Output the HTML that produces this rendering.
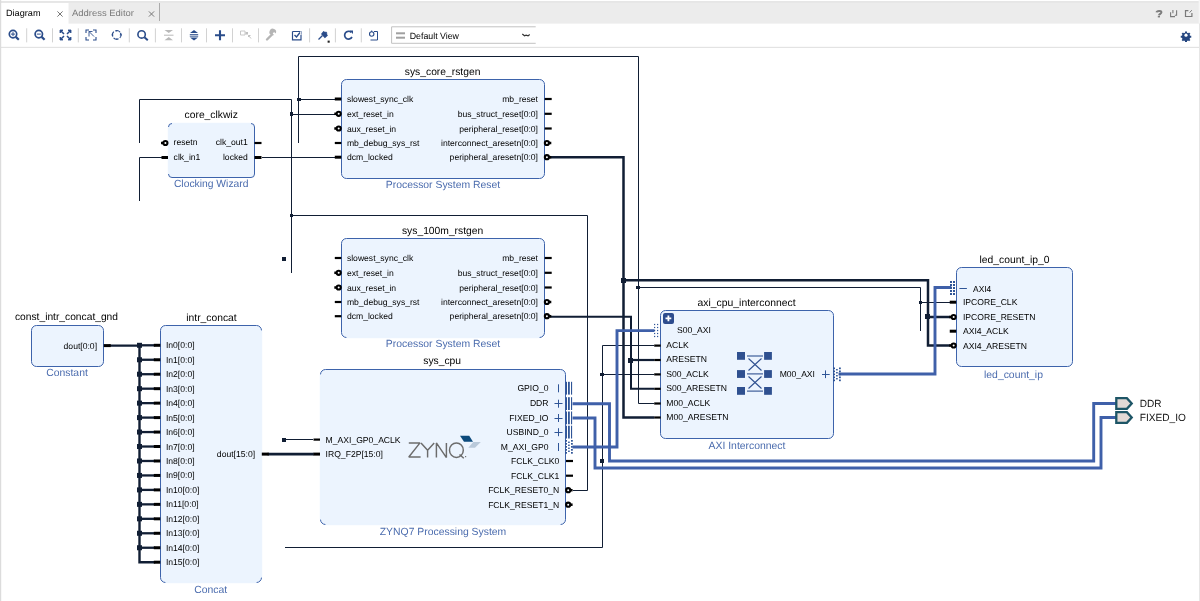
<!DOCTYPE html>
<html><head><meta charset="utf-8"><style>html,body{margin:0;padding:0;background:#fff;overflow:hidden}svg{display:block;will-change:transform}</style></head><body>
<svg width="1200" height="601" viewBox="0 0 1200 601" font-family='"Liberation Sans", sans-serif' text-rendering="geometricPrecision">
<rect x="0" y="0" width="1200" height="601" fill="#fff"/>
<rect x="0" y="0" width="1200" height="23.6" fill="#ececec"/>
<rect x="0" y="0" width="1200" height="1.3" fill="#ffffff"/>
<rect x="0" y="1.3" width="1200" height="1.2" fill="#e2e2e2"/>
<rect x="1198.6" y="0" width="1.4" height="23.5" fill="#f6f6f6"/>
<rect x="1" y="3" width="67.5" height="21" fill="#fff"/>
<text x="6" y="15.9" font-size="9" text-anchor="start" fill="#000" textLength="34.5" lengthAdjust="spacingAndGlyphs" >Diagram</text>
<text x="72" y="15.9" font-size="9" text-anchor="start" fill="#7a7a7a" textLength="62" lengthAdjust="spacingAndGlyphs" >Address Editor</text>
<path d="M57.4,11.4 L62.6,16.6 M62.6,11.4 L57.4,16.6" stroke="#777" stroke-width="1"/>
<path d="M148.9,11.4 L154.1,16.6 M154.1,11.4 L148.9,16.6" stroke="#777" stroke-width="1"/>
<line x1="159.5" y1="3" x2="159.5" y2="21" stroke="#ababab" stroke-width="1"/>
<path d="M1156.6,12.4 C1156.8,10.6 1161.4,10.4 1161.4,12.2 C1161.4,13.6 1159.3,13.9 1159,15.2" fill="none" stroke="#7e7e7e" stroke-width="2"/>
<rect x="1157.8" y="15.8" width="2.2" height="1.6" fill="#7e7e7e"/>
<path d="M1170.6,12.2 v4.4 h4.4 M1172.9,10 v3.2 M1176.6,10.2 v5 h-1.8" fill="none" stroke="#7a7a7a" stroke-width="1.1"/>
<path d="M1188.4,10.6 h-2.9 v5.9 h6.4 v-3.6" fill="none" stroke="#7a7a7a" stroke-width="1.2"/>
<path d="M1189.6,12.6 l2.2,-2.4" fill="none" stroke="#7a7a7a" stroke-width="1"/>
<rect x="0" y="46.8" width="1200" height="1.2" fill="#e3e3e3"/>
<rect x="0" y="0" width="1.2" height="601" fill="#dcdcdc"/>
<rect x="1199" y="23.5" width="1" height="578" fill="#e6e6e6"/>
<line x1="26.7" y1="28.3" x2="26.7" y2="42.4" stroke="#d2d2d2" stroke-width="1"/>
<line x1="52.5" y1="28.3" x2="52.5" y2="42.4" stroke="#d2d2d2" stroke-width="1"/>
<line x1="78.3" y1="28.3" x2="78.3" y2="42.4" stroke="#d2d2d2" stroke-width="1"/>
<line x1="129.3" y1="28.3" x2="129.3" y2="42.4" stroke="#d2d2d2" stroke-width="1"/>
<line x1="155.4" y1="28.3" x2="155.4" y2="42.4" stroke="#d2d2d2" stroke-width="1"/>
<line x1="181.5" y1="28.3" x2="181.5" y2="42.4" stroke="#d2d2d2" stroke-width="1"/>
<line x1="206.5" y1="28.3" x2="206.5" y2="42.4" stroke="#d2d2d2" stroke-width="1"/>
<line x1="232.5" y1="28.3" x2="232.5" y2="42.4" stroke="#d2d2d2" stroke-width="1"/>
<line x1="258.5" y1="28.3" x2="258.5" y2="42.4" stroke="#d2d2d2" stroke-width="1"/>
<line x1="309.6" y1="28.3" x2="309.6" y2="42.4" stroke="#d2d2d2" stroke-width="1"/>
<line x1="335.4" y1="28.3" x2="335.4" y2="42.4" stroke="#d2d2d2" stroke-width="1"/>
<line x1="361.3" y1="28.3" x2="361.3" y2="42.4" stroke="#d2d2d2" stroke-width="1"/>
<circle cx="13" cy="34.1" r="3.7" fill="none" stroke="#2a4c8a" stroke-width="1.7"/>
<path d="M11,34.1 h4 M13,32.1 v4" stroke="#2a4c8a" stroke-width="1"/>
<path d="M15.8,36.9 L18.8,39.8" stroke="#2a4c8a" stroke-width="2.2"/>
<circle cx="38.8" cy="34.1" r="3.7" fill="none" stroke="#2a4c8a" stroke-width="1.7"/>
<path d="M36.8,34.1 h4" stroke="#2a4c8a" stroke-width="1"/>
<path d="M41.6,36.9 L44.6,39.8" stroke="#2a4c8a" stroke-width="2.2"/>
<path d="M60.5,30.5 l3.5,3.5 M70.5,30.5 l-3.5,3.5 M60.5,39.5 l3.5,-3.5 M70.5,39.5 l-3.5,-3.5" stroke="#2a4c8a" stroke-width="1.5"/>
<path d="M60,30 h3 l-3,3 z M71,30 h-3 l3,3 z M60,40 h3 l-3,-3 z M71,40 h-3 l3,-3 z" fill="#2a4c8a" stroke="#2a4c8a" stroke-width="0.8"/>
<path d="M86,33 v-3 h3 M93,30 h3 v3 M96,37 v3 h-3 M89,40 h-3 v-3" fill="none" stroke="#2a4c8a" stroke-width="1.1"/>
<path d="M89,31.5 l5,5 M89,31.5 v5 M89,31.5 h3.5" fill="none" stroke="#2a4c8a" stroke-width="0.9"/>
<circle cx="116.7" cy="34.9" r="4.3" fill="none" stroke="#2a4c8a" stroke-width="1.1" stroke-dasharray="5.2 1.55" transform="rotate(-28 116.7 34.9)"/>
<path d="M116.7,30 v1.6 M121.7,34.9 h-1.8 M116.7,39.8 v-1.2 M111.7,34.9 h1.5" stroke="#2a4c8a" stroke-width="1.2"/>
<circle cx="141.6" cy="34.4" r="3.7" fill="none" stroke="#2a4c8a" stroke-width="1.6"/>
<path d="M144.4,37.2 L147.8,40.2" stroke="#2a4c8a" stroke-width="2"/>
<path d="M164.5,30 h8.5 l-4.25,3 z M164.5,40.2 h8.5 l-4.25,-3.2 z" fill="#b8b8b8"/>
<path d="M164,35.2 h9.5" stroke="#b8b8b8" stroke-width="1"/>
<path d="M190,33 h8 l-4,-3 z M190,37.4 h8 l-4,3 z" fill="#2a4c8a"/>
<path d="M189.8,34.6 h8.4 M189.8,36.2 h8.4" stroke="#2a4c8a" stroke-width="0.9"/>
<path d="M215,35.2 h10 M220,30.2 v10" stroke="#2a4c8a" stroke-width="2.1"/>
<path d="M240.5,31 h4.5 v4 h-4.5 z" fill="none" stroke="#c8c8c8" stroke-width="1"/>
<rect x="245.5" y="32" width="2.5" height="2.5" fill="#c0c0c0"/>
<path d="M248.5,35.5 l2.5,3 M248.5,35.5 h2 M248.5,35.5 v1.5" fill="none" stroke="#c0c0c0" stroke-width="1"/>
<path d="M267,39.5 l5,-5" stroke="#b5b5b5" stroke-width="2.4" stroke-linecap="round"/>
<path d="M271.5,35 a3.3,3.3 0 1 1 4.2,-1.6 l-1.6,-1.4 -1.5,1.5 1.4,1.6 a3.3,3.3 0 0 1 -2.5,-0.1 z" fill="#b5b5b5"/>
<path d="M292.5,31.5 h7.5 M292.5,31.5 v8.3 h8.5 v-5" fill="none" stroke="#2a4c8a" stroke-width="1.2"/>
<path d="M294.5,35 l2,2 3.5,-4.5" fill="none" stroke="#2a4c8a" stroke-width="1.4"/>
<path d="M298,31.5 h3.5 v3" fill="none" stroke="#2a4c8a" stroke-width="0.8" opacity="0.6"/>
<path d="M318.5,39.5 l4,-4" stroke="#2a4c8a" stroke-width="1.3"/>
<path d="M321,34 l2.5,-3 2,1.2 0.3,-1 1.8,2 -1,0.4 1.3,2 -3,2.6 z" fill="#2a4c8a"/>
<rect x="327.6" y="40.6" width="2.1" height="2.1" fill="#222"/>
<path d="M351.2,32.3 A3.9,3.9 0 1 0 352,37" fill="none" stroke="#2a4c8a" stroke-width="1.7"/>
<path d="M349.5,30.5 h3.5 v3.5 z" fill="#2a4c8a"/>
<path d="M374,31.5 h3.5 M377.5,31.5 v8.5 h-7" fill="none" stroke="#2a4c8a" stroke-width="1"/>
<circle cx="371.7" cy="34" r="2.2" fill="none" stroke="#2a4c8a" stroke-width="1.1"/>
<path d="M371.7,30.5 v1.5" stroke="#2a4c8a" stroke-width="1"/>
<path d="M535.7,26.8 H391.6 V43.3 H535.7" fill="none" stroke="#c2c2c2" stroke-width="1"/>
<rect x="396" y="32.3" width="9" height="2" fill="#a0a0a0"/>
<rect x="396" y="36.7" width="9" height="2" fill="#a0a0a0"/>
<text x="409.7" y="39.2" font-size="9" text-anchor="start" fill="#000" textLength="49.3" lengthAdjust="spacingAndGlyphs" >Default View</text>
<path d="M522.3,34 l2.2,1.8 1.6,-0.7 2,0.8 1.6,-1.4" fill="none" stroke="#333" stroke-width="1.2"/>
<g transform="translate(1186,35.2) scale(0.72)"><path d="M-1.4,-5 h2.8 v1.6 l1.6,0.8 1.2,-1.2 1.9,1.9 -1.2,1.2 0.8,1.6 h1.6 v2.8 h-1.6 l-0.8,1.6 1.2,1.2 -1.9,1.9 -1.2,-1.2 -1.6,0.8 v1.6 h-2.8 v-1.6 l-1.6,-0.8 -1.2,1.2 -1.9,-1.9 1.2,-1.2 -0.8,-1.6 h-1.6 v-2.8 h1.6 l0.8,-1.6 -1.2,-1.2 1.9,-1.9 1.2,1.2 1.6,-0.8 z" fill="#23457f"/><circle r="2.2" fill="#fff"/></g>
<polyline points="139.5,142.5 139.5,99.5 291.5,99.5 291.5,272.5" fill="none" stroke="#111e34" stroke-width="1.0" stroke-linejoin="miter" stroke-linecap="square" />
<polyline points="291.5,114.5 335.5,114.5" fill="none" stroke="#111e34" stroke-width="1.0" stroke-linejoin="miter" stroke-linecap="square" />
<polyline points="291.5,215.5 587.5,215.5 587.5,490.5 573.5,490.5" fill="none" stroke="#111e34" stroke-width="1.0" stroke-linejoin="miter" stroke-linecap="square" />
<polyline points="298.5,142.5 298.5,56.5 638.5,56.5 638.5,403.5 653.5,403.5" fill="none" stroke="#111e34" stroke-width="1.0" stroke-linejoin="miter" stroke-linecap="square" />
<polyline points="298.5,99.5 335.5,99.5" fill="none" stroke="#111e34" stroke-width="1.0" stroke-linejoin="miter" stroke-linecap="square" />
<polyline points="638.5,287.5 920.5,287.5 920.5,330.5" fill="none" stroke="#111e34" stroke-width="1.0" stroke-linejoin="miter" stroke-linecap="square" />
<polyline points="920.5,302.5 949.5,302.5" fill="none" stroke="#111e34" stroke-width="1.0" stroke-linejoin="miter" stroke-linecap="square" />
<polyline points="161.5,157.5 139.5,157.5 139.5,200.5" fill="none" stroke="#111e34" stroke-width="1.0" stroke-linejoin="miter" stroke-linecap="square" />
<polyline points="262.5,157.5 335.5,157.5" fill="none" stroke="#111e34" stroke-width="1.0" stroke-linejoin="miter" stroke-linecap="square" />
<polyline points="284.5,439.5 312.5,439.5" fill="none" stroke="#111e34" stroke-width="1.0" stroke-linejoin="miter" stroke-linecap="square" />
<polyline points="653.5,345.5 602.5,345.5 602.5,547.5 285.5,547.5" fill="none" stroke="#111e34" stroke-width="1.0" stroke-linejoin="miter" stroke-linecap="square" />
<polyline points="602.5,374.5 653.5,374.5" fill="none" stroke="#111e34" stroke-width="1.0" stroke-linejoin="miter" stroke-linecap="square" />
<polyline points="551,316.8 631,316.8 631,388.8 653,388.8" fill="none" stroke="#111e34" stroke-width="2.0" stroke-linejoin="miter" stroke-linecap="square" />
<polyline points="631,360 653,360" fill="none" stroke="#111e34" stroke-width="2.2" stroke-linejoin="miter" stroke-linecap="square" />
<polyline points="551,157.2 623.5,157.2 623.5,417.5 653,417.5" fill="none" stroke="#111e34" stroke-width="2.5" stroke-linejoin="miter" stroke-linecap="square" />
<polyline points="623.5,280.2 928,280.2 928,345.5 949,345.5" fill="none" stroke="#111e34" stroke-width="2.5" stroke-linejoin="miter" stroke-linecap="square" />
<polyline points="928,317 949,317" fill="none" stroke="#111e34" stroke-width="2.5" stroke-linejoin="miter" stroke-linecap="square" />
<polyline points="110,345.6 139.5,345.6 139.5,562.2 154,562.2" fill="none" stroke="#111e34" stroke-width="2.4" stroke-linejoin="miter" stroke-linecap="square" />
<polyline points="139.5,345.3 154,345.3" fill="none" stroke="#111e34" stroke-width="2.3" stroke-linejoin="miter" stroke-linecap="square" />
<polyline points="139.5,359.76 154,359.76" fill="none" stroke="#111e34" stroke-width="2.3" stroke-linejoin="miter" stroke-linecap="square" />
<polyline points="139.5,374.22 154,374.22" fill="none" stroke="#111e34" stroke-width="2.3" stroke-linejoin="miter" stroke-linecap="square" />
<polyline points="139.5,388.68 154,388.68" fill="none" stroke="#111e34" stroke-width="2.3" stroke-linejoin="miter" stroke-linecap="square" />
<polyline points="139.5,403.14 154,403.14" fill="none" stroke="#111e34" stroke-width="2.3" stroke-linejoin="miter" stroke-linecap="square" />
<polyline points="139.5,417.6 154,417.6" fill="none" stroke="#111e34" stroke-width="2.3" stroke-linejoin="miter" stroke-linecap="square" />
<polyline points="139.5,432.06 154,432.06" fill="none" stroke="#111e34" stroke-width="2.3" stroke-linejoin="miter" stroke-linecap="square" />
<polyline points="139.5,446.52 154,446.52" fill="none" stroke="#111e34" stroke-width="2.3" stroke-linejoin="miter" stroke-linecap="square" />
<polyline points="139.5,460.98 154,460.98" fill="none" stroke="#111e34" stroke-width="2.3" stroke-linejoin="miter" stroke-linecap="square" />
<polyline points="139.5,475.44000000000005 154,475.44000000000005" fill="none" stroke="#111e34" stroke-width="2.3" stroke-linejoin="miter" stroke-linecap="square" />
<polyline points="139.5,489.90000000000003 154,489.90000000000003" fill="none" stroke="#111e34" stroke-width="2.3" stroke-linejoin="miter" stroke-linecap="square" />
<polyline points="139.5,504.36 154,504.36" fill="none" stroke="#111e34" stroke-width="2.3" stroke-linejoin="miter" stroke-linecap="square" />
<polyline points="139.5,518.82 154,518.82" fill="none" stroke="#111e34" stroke-width="2.3" stroke-linejoin="miter" stroke-linecap="square" />
<polyline points="139.5,533.28 154,533.28" fill="none" stroke="#111e34" stroke-width="2.3" stroke-linejoin="miter" stroke-linecap="square" />
<polyline points="139.5,547.74 154,547.74" fill="none" stroke="#111e34" stroke-width="2.3" stroke-linejoin="miter" stroke-linecap="square" />
<polyline points="269,454.1 312.5,454.1" fill="none" stroke="#111e34" stroke-width="2.8" stroke-linejoin="miter" stroke-linecap="square" />
<rect x="290" y="112" width="3" height="4" fill="#111e34"/>
<rect x="290" y="214" width="3" height="3" fill="#111e34"/>
<rect x="297" y="98" width="4" height="3" fill="#111e34"/>
<rect x="636" y="286" width="4" height="3" fill="#111e34"/>
<rect x="919" y="301" width="3" height="3" fill="#111e34"/>
<rect x="600" y="373" width="4" height="3" fill="#111e34"/>
<rect x="600" y="459" width="4" height="4" fill="#111e34"/>
<rect x="282" y="257" width="4" height="4" fill="#111e34"/>
<rect x="282" y="438" width="4" height="4" fill="#111e34"/>
<rect x="621" y="278" width="5" height="5" fill="#111e34"/>
<rect x="925" y="314" width="5" height="5" fill="#111e34"/>
<rect x="628" y="358" width="5" height="5" fill="#111e34"/>
<rect x="137" y="342.8" width="5" height="5" fill="#111e34"/>
<rect x="137" y="357.26" width="5" height="5" fill="#111e34"/>
<rect x="137" y="371.72" width="5" height="5" fill="#111e34"/>
<rect x="137" y="386.18" width="5" height="5" fill="#111e34"/>
<rect x="137" y="400.64" width="5" height="5" fill="#111e34"/>
<rect x="137" y="415.1" width="5" height="5" fill="#111e34"/>
<rect x="137" y="429.56" width="5" height="5" fill="#111e34"/>
<rect x="137" y="444.02" width="5" height="5" fill="#111e34"/>
<rect x="137" y="458.48" width="5" height="5" fill="#111e34"/>
<rect x="137" y="472.94000000000005" width="5" height="5" fill="#111e34"/>
<rect x="137" y="487.40000000000003" width="5" height="5" fill="#111e34"/>
<rect x="137" y="501.86" width="5" height="5" fill="#111e34"/>
<rect x="137" y="516.32" width="5" height="5" fill="#111e34"/>
<rect x="137" y="530.78" width="5" height="5" fill="#111e34"/>
<rect x="137" y="545.24" width="5" height="5" fill="#111e34"/>
<polyline points="653,330.6 617,330.6 617,447 574,447" fill="none" stroke="#3f60a9" stroke-width="2.9" stroke-linejoin="miter" stroke-linecap="square" />
<polyline points="574,403.7 609.5,403.7 609.5,461 1093.7,461 1093.7,403.5 1115,403.5" fill="none" stroke="#3f60a9" stroke-width="2.9" stroke-linejoin="miter" stroke-linecap="square" />
<polyline points="574,418 595,418 595,468 1101,468 1101,417.5 1115,417.5" fill="none" stroke="#3f60a9" stroke-width="2.9" stroke-linejoin="miter" stroke-linecap="square" />
<polyline points="840,374 935,374 935,287.5 950,287.5" fill="none" stroke="#3f60a9" stroke-width="2.9" stroke-linejoin="miter" stroke-linecap="square" />
<rect x="168.5" y="123.5" width="86.0" height="54.0" rx="3.5" ry="3.5" fill="#ecf4fe" stroke="#3d63ab" stroke-width="1"/>
<rect x="172.0" y="122.8" width="79.0" height="1.4" fill="#ecf4fe"/>
<rect x="167.8" y="127.0" width="1.4" height="47.0" fill="#ecf4fe"/>
<text x="211.2" y="118" font-size="10.3" text-anchor="middle" fill="#000" >core_clkwiz</text>
<text x="211.2" y="187" font-size="10.4" text-anchor="middle" fill="#4b6cae" textLength="74.6" lengthAdjust="spacingAndGlyphs" >Clocking Wizard</text>
<line x1="161" y1="143" x2="165.4" y2="143" stroke="#000" stroke-width="2.5"/>
<circle cx="165.4" cy="143" r="2.05" fill="#fff" stroke="#000" stroke-width="2.1"/>
<text x="173.6" y="145.2" font-size="8.6" text-anchor="start" fill="#000" >resetn</text>
<line x1="161.5" y1="157.5" x2="168" y2="157.5" stroke="#000" stroke-width="3.0"/>
<text x="173.6" y="159.7" font-size="8.6" text-anchor="start" fill="#000" >clk_in1</text>
<line x1="254.5" y1="143" x2="261.5" y2="143" stroke="#000" stroke-width="2.2"/>
<text x="247.8" y="145.2" font-size="8.6" text-anchor="end" fill="#000" >clk_out1</text>
<line x1="254.5" y1="157.5" x2="261.5" y2="157.5" stroke="#000" stroke-width="3.0"/>
<text x="247.8" y="159.7" font-size="8.6" text-anchor="end" fill="#000" >locked</text>
<rect x="341.5" y="79.5" width="203.0" height="99.0" rx="5" ry="5" fill="#ecf4fe" stroke="#3d63ab" stroke-width="1"/>
<text x="442.6" y="75.0" font-size="10.3" text-anchor="middle" fill="#000" >sys_core_rstgen</text>
<text x="443" y="188.0" font-size="10.4" text-anchor="middle" fill="#4b6cae" textLength="114.5" lengthAdjust="spacingAndGlyphs" >Processor System Reset</text>
<line x1="334.8" y1="99" x2="341.3" y2="99" stroke="#000" stroke-width="3.0"/>
<text x="346.90000000000003" y="102.0" font-size="8.6" text-anchor="start" fill="#000" >slowest_sync_clk</text>
<line x1="334.3" y1="113.8" x2="338.7" y2="113.8" stroke="#000" stroke-width="2.5"/>
<circle cx="338.7" cy="113.8" r="2.05" fill="#fff" stroke="#000" stroke-width="2.1"/>
<text x="346.90000000000003" y="116.8" font-size="8.6" text-anchor="start" fill="#000" >ext_reset_in</text>
<line x1="334.3" y1="128.5" x2="338.7" y2="128.5" stroke="#000" stroke-width="2.5"/>
<circle cx="338.7" cy="128.5" r="2.05" fill="#fff" stroke="#000" stroke-width="2.1"/>
<text x="346.90000000000003" y="131.5" font-size="8.6" text-anchor="start" fill="#000" >aux_reset_in</text>
<line x1="334.8" y1="143" x2="341.3" y2="143" stroke="#000" stroke-width="2.2"/>
<text x="346.90000000000003" y="146.0" font-size="8.6" text-anchor="start" fill="#000" >mb_debug_sys_rst</text>
<line x1="334.8" y1="157.2" x2="341.3" y2="157.2" stroke="#000" stroke-width="3.0"/>
<text x="346.90000000000003" y="160.2" font-size="8.6" text-anchor="start" fill="#000" >dcm_locked</text>
<line x1="544.7" y1="99" x2="551.7" y2="99" stroke="#000" stroke-width="2.2"/>
<text x="538.0" y="102.0" font-size="8.6" text-anchor="end" fill="#000" >mb_reset</text>
<line x1="544.7" y1="113.8" x2="551.7" y2="113.8" stroke="#000" stroke-width="2.2"/>
<text x="538.0" y="116.8" font-size="8.6" text-anchor="end" fill="#000" >bus_struct_reset[0:0]</text>
<line x1="544.7" y1="128.5" x2="551.7" y2="128.5" stroke="#000" stroke-width="2.2"/>
<text x="538.0" y="131.5" font-size="8.6" text-anchor="end" fill="#000" >peripheral_reset[0:0]</text>
<line x1="546.9000000000001" y1="143" x2="551.3000000000001" y2="143" stroke="#000" stroke-width="2.5"/>
<circle cx="546.9000000000001" cy="143" r="2.05" fill="#fff" stroke="#000" stroke-width="2.1"/>
<text x="538.0" y="146.0" font-size="8.6" text-anchor="end" fill="#000" >interconnect_aresetn[0:0]</text>
<line x1="546.9000000000001" y1="157.2" x2="551.3000000000001" y2="157.2" stroke="#000" stroke-width="2.5"/>
<circle cx="546.9000000000001" cy="157.2" r="2.05" fill="#fff" stroke="#000" stroke-width="2.1"/>
<text x="538.0" y="160.2" font-size="8.6" text-anchor="end" fill="#000" >peripheral_aresetn[0:0]</text>
<rect x="341.5" y="238.5" width="203.0" height="99.0" rx="5" ry="5" fill="#ecf4fe" stroke="#3d63ab" stroke-width="1"/>
<rect x="346.5" y="336.8" width="193.0" height="1.4" fill="#ecf4fe"/>
<text x="442.6" y="234.0" font-size="10.3" text-anchor="middle" fill="#000" >sys_100m_rstgen</text>
<text x="443" y="347.0" font-size="10.4" text-anchor="middle" fill="#4b6cae" textLength="114.5" lengthAdjust="spacingAndGlyphs" >Processor System Reset</text>
<line x1="334.8" y1="258" x2="341.3" y2="258" stroke="#000" stroke-width="2.2"/>
<text x="346.90000000000003" y="261.0" font-size="8.6" text-anchor="start" fill="#000" >slowest_sync_clk</text>
<line x1="334.3" y1="272.8" x2="338.7" y2="272.8" stroke="#000" stroke-width="2.5"/>
<circle cx="338.7" cy="272.8" r="2.05" fill="#fff" stroke="#000" stroke-width="2.1"/>
<text x="346.90000000000003" y="275.8" font-size="8.6" text-anchor="start" fill="#000" >ext_reset_in</text>
<line x1="334.3" y1="287.5" x2="338.7" y2="287.5" stroke="#000" stroke-width="2.5"/>
<circle cx="338.7" cy="287.5" r="2.05" fill="#fff" stroke="#000" stroke-width="2.1"/>
<text x="346.90000000000003" y="290.5" font-size="8.6" text-anchor="start" fill="#000" >aux_reset_in</text>
<line x1="334.8" y1="302" x2="341.3" y2="302" stroke="#000" stroke-width="2.2"/>
<text x="346.90000000000003" y="305.0" font-size="8.6" text-anchor="start" fill="#000" >mb_debug_sys_rst</text>
<line x1="334.8" y1="316.2" x2="341.3" y2="316.2" stroke="#000" stroke-width="2.2"/>
<text x="346.90000000000003" y="319.2" font-size="8.6" text-anchor="start" fill="#000" >dcm_locked</text>
<line x1="544.7" y1="258" x2="551.7" y2="258" stroke="#000" stroke-width="2.2"/>
<text x="538.0" y="261.0" font-size="8.6" text-anchor="end" fill="#000" >mb_reset</text>
<line x1="544.7" y1="272.8" x2="551.7" y2="272.8" stroke="#000" stroke-width="2.2"/>
<text x="538.0" y="275.8" font-size="8.6" text-anchor="end" fill="#000" >bus_struct_reset[0:0]</text>
<line x1="544.7" y1="287.5" x2="551.7" y2="287.5" stroke="#000" stroke-width="2.2"/>
<text x="538.0" y="290.5" font-size="8.6" text-anchor="end" fill="#000" >peripheral_reset[0:0]</text>
<line x1="546.9000000000001" y1="302" x2="551.3000000000001" y2="302" stroke="#000" stroke-width="2.5"/>
<circle cx="546.9000000000001" cy="302" r="2.05" fill="#fff" stroke="#000" stroke-width="2.1"/>
<text x="538.0" y="305.0" font-size="8.6" text-anchor="end" fill="#000" >interconnect_aresetn[0:0]</text>
<line x1="546.9000000000001" y1="316.2" x2="551.3000000000001" y2="316.2" stroke="#000" stroke-width="2.5"/>
<circle cx="546.9000000000001" cy="316.2" r="2.05" fill="#fff" stroke="#000" stroke-width="2.1"/>
<text x="538.0" y="319.2" font-size="8.6" text-anchor="end" fill="#000" >peripheral_aresetn[0:0]</text>
<rect x="31.5" y="325.5" width="72.0" height="41.0" rx="5" ry="5" fill="#ecf4fe" stroke="#3d63ab" stroke-width="1"/>
<text x="66.5" y="320" font-size="10.3" text-anchor="middle" fill="#000" textLength="103" lengthAdjust="spacingAndGlyphs" >const_intr_concat_gnd</text>
<text x="67" y="376" font-size="10.4" text-anchor="middle" fill="#4b6cae" >Constant</text>
<line x1="103.75" y1="345.6" x2="110.75" y2="345.6" stroke="#000" stroke-width="3.0"/>
<text x="97.05" y="348.6" font-size="8.6" text-anchor="end" fill="#000" >dout[0:0]</text>
<rect x="160.5" y="325.5" width="101.0" height="257.0" rx="5" ry="5" fill="#ecf4fe" stroke="#3d63ab" stroke-width="1"/>
<rect x="165.5" y="581.8" width="91.0" height="1.4" fill="#ecf4fe"/>
<rect x="260.8" y="330.5" width="1.4" height="247.0" fill="#ecf4fe"/>
<text x="211.5" y="320.8" font-size="10.3" text-anchor="middle" fill="#000" >intr_concat</text>
<text x="210.7" y="593" font-size="10.4" text-anchor="middle" fill="#4b6cae" >Concat</text>
<line x1="153.8" y1="345.3" x2="160.3" y2="345.3" stroke="#000" stroke-width="3.0"/>
<text x="165.9" y="348.3" font-size="8.6" text-anchor="start" fill="#000" >In0[0:0]</text>
<line x1="153.8" y1="359.76" x2="160.3" y2="359.76" stroke="#000" stroke-width="3.0"/>
<text x="165.9" y="362.76" font-size="8.6" text-anchor="start" fill="#000" >In1[0:0]</text>
<line x1="153.8" y1="374.22" x2="160.3" y2="374.22" stroke="#000" stroke-width="3.0"/>
<text x="165.9" y="377.22" font-size="8.6" text-anchor="start" fill="#000" >In2[0:0]</text>
<line x1="153.8" y1="388.68" x2="160.3" y2="388.68" stroke="#000" stroke-width="3.0"/>
<text x="165.9" y="391.68" font-size="8.6" text-anchor="start" fill="#000" >In3[0:0]</text>
<line x1="153.8" y1="403.14" x2="160.3" y2="403.14" stroke="#000" stroke-width="3.0"/>
<text x="165.9" y="406.14" font-size="8.6" text-anchor="start" fill="#000" >In4[0:0]</text>
<line x1="153.8" y1="417.6" x2="160.3" y2="417.6" stroke="#000" stroke-width="3.0"/>
<text x="165.9" y="420.6" font-size="8.6" text-anchor="start" fill="#000" >In5[0:0]</text>
<line x1="153.8" y1="432.06" x2="160.3" y2="432.06" stroke="#000" stroke-width="3.0"/>
<text x="165.9" y="435.06" font-size="8.6" text-anchor="start" fill="#000" >In6[0:0]</text>
<line x1="153.8" y1="446.52" x2="160.3" y2="446.52" stroke="#000" stroke-width="3.0"/>
<text x="165.9" y="449.52" font-size="8.6" text-anchor="start" fill="#000" >In7[0:0]</text>
<line x1="153.8" y1="460.98" x2="160.3" y2="460.98" stroke="#000" stroke-width="3.0"/>
<text x="165.9" y="463.98" font-size="8.6" text-anchor="start" fill="#000" >In8[0:0]</text>
<line x1="153.8" y1="475.44000000000005" x2="160.3" y2="475.44000000000005" stroke="#000" stroke-width="3.0"/>
<text x="165.9" y="478.44000000000005" font-size="8.6" text-anchor="start" fill="#000" >In9[0:0]</text>
<line x1="153.8" y1="489.90000000000003" x2="160.3" y2="489.90000000000003" stroke="#000" stroke-width="3.0"/>
<text x="165.9" y="492.90000000000003" font-size="8.6" text-anchor="start" fill="#000" >In10[0:0]</text>
<line x1="153.8" y1="504.36" x2="160.3" y2="504.36" stroke="#000" stroke-width="3.0"/>
<text x="165.9" y="507.36" font-size="8.6" text-anchor="start" fill="#000" >In11[0:0]</text>
<line x1="153.8" y1="518.82" x2="160.3" y2="518.82" stroke="#000" stroke-width="3.0"/>
<text x="165.9" y="521.82" font-size="8.6" text-anchor="start" fill="#000" >In12[0:0]</text>
<line x1="153.8" y1="533.28" x2="160.3" y2="533.28" stroke="#000" stroke-width="3.0"/>
<text x="165.9" y="536.28" font-size="8.6" text-anchor="start" fill="#000" >In13[0:0]</text>
<line x1="153.8" y1="547.74" x2="160.3" y2="547.74" stroke="#000" stroke-width="3.0"/>
<text x="165.9" y="550.74" font-size="8.6" text-anchor="start" fill="#000" >In14[0:0]</text>
<line x1="153.8" y1="562.2" x2="160.3" y2="562.2" stroke="#000" stroke-width="3.0"/>
<text x="165.9" y="565.2" font-size="8.6" text-anchor="start" fill="#000" >In15[0:0]</text>
<line x1="261.8" y1="454.1" x2="268.8" y2="454.1" stroke="#000" stroke-width="3.0"/>
<text x="255.10000000000002" y="457.1" font-size="8.6" text-anchor="end" fill="#000" >dout[15:0]</text>
<rect x="320.5" y="369.5" width="245.0" height="155.0" rx="5" ry="5" fill="#ecf4fe" stroke="#3d63ab" stroke-width="1"/>
<rect x="325.5" y="523.8" width="235.0" height="1.4" fill="#ecf4fe"/>
<rect x="319.8" y="374.5" width="1.4" height="145.0" fill="#ecf4fe"/>
<text x="442.2" y="364.2" font-size="10.3" text-anchor="middle" fill="#000" >sys_cpu</text>
<text x="443" y="534.6" font-size="10.4" text-anchor="middle" fill="#4b6cae" >ZYNQ7 Processing System</text>
<line x1="313.5" y1="439.6" x2="320" y2="439.6" stroke="#000" stroke-width="2.2"/>
<text x="325.6" y="442.6" font-size="8.6" text-anchor="start" fill="#000" >M_AXI_GP0_ACLK</text>
<line x1="313.5" y1="454.1" x2="320" y2="454.1" stroke="#000" stroke-width="3.0"/>
<text x="325.6" y="457.1" font-size="8.6" text-anchor="start" fill="#000" >IRQ_F2P[15:0]</text>
<line x1="566" y1="461" x2="573" y2="461" stroke="#000" stroke-width="2.2"/>
<text x="559.3" y="464.0" font-size="8.6" text-anchor="end" fill="#000" >FCLK_CLK0</text>
<line x1="566" y1="475.7" x2="573" y2="475.7" stroke="#000" stroke-width="2.2"/>
<text x="559.3" y="478.7" font-size="8.6" text-anchor="end" fill="#000" >FCLK_CLK1</text>
<line x1="568.2" y1="490.2" x2="572.6" y2="490.2" stroke="#000" stroke-width="2.5"/>
<circle cx="568.2" cy="490.2" r="2.05" fill="#fff" stroke="#000" stroke-width="2.1"/>
<text x="559.3" y="493.2" font-size="8.6" text-anchor="end" fill="#000" >FCLK_RESET0_N</text>
<line x1="568.2" y1="504.7" x2="572.6" y2="504.7" stroke="#000" stroke-width="2.5"/>
<circle cx="568.2" cy="504.7" r="2.05" fill="#fff" stroke="#000" stroke-width="2.1"/>
<text x="559.3" y="507.7" font-size="8.6" text-anchor="end" fill="#000" >FCLK_RESET1_N</text>
<text x="548.5" y="390.8" font-size="8.6" text-anchor="end" fill="#000" >GPIO_0</text>
<path d="M558.5,384.3 v8" stroke="#2f5597" stroke-width="1"/>
<rect x="565.5" y="381.8" width="1.5" height="12.8" fill="#2f5597"/>
<rect x="568" y="381.8" width="1.8" height="12.8" fill="#2f5597"/>
<rect x="571" y="381.8" width="1.1" height="12.8" fill="#2f5597"/>
<text x="548.5" y="406.2" font-size="8.6" text-anchor="end" fill="#000" >DDR</text>
<path d="M554.5,403.5 h8 M558.5,399.7 v8" stroke="#2f5597" stroke-width="1"/>
<rect x="565.5" y="397.2" width="1.5" height="12.8" fill="#2f5597"/>
<rect x="568" y="397.2" width="1.8" height="12.8" fill="#2f5597"/>
<rect x="571" y="397.2" width="1.1" height="12.8" fill="#2f5597"/>
<text x="548.5" y="420.5" font-size="8.6" text-anchor="end" fill="#000" >FIXED_IO</text>
<path d="M554.5,418.5 h8 M558.5,414 v8" stroke="#2f5597" stroke-width="1"/>
<rect x="565.5" y="411.5" width="1.5" height="12.8" fill="#2f5597"/>
<rect x="568" y="411.5" width="1.8" height="12.8" fill="#2f5597"/>
<rect x="571" y="411.5" width="1.1" height="12.8" fill="#2f5597"/>
<text x="548.5" y="434.7" font-size="8.6" text-anchor="end" fill="#000" >USBIND_0</text>
<path d="M554.5,432.5 h8 M558.5,428.2 v8" stroke="#2f5597" stroke-width="1"/>
<rect x="565.5" y="425.7" width="1.5" height="12.8" fill="#2f5597"/>
<rect x="568" y="425.7" width="1.8" height="12.8" fill="#2f5597"/>
<rect x="571" y="425.7" width="1.1" height="12.8" fill="#2f5597"/>
<text x="548.5" y="449.5" font-size="8.6" text-anchor="end" fill="#000" >M_AXI_GP0</text>
<path d="M558.5,443 v8" stroke="#2f5597" stroke-width="1"/>
<rect x="565" y="440" width="2" height="1.7" fill="#2f5597"/>
<rect x="571" y="440" width="1.8" height="1.7" fill="#2f5597"/>
<rect x="565" y="443" width="2" height="1.7" fill="#2f5597"/>
<rect x="571" y="443" width="1.8" height="1.7" fill="#2f5597"/>
<rect x="565" y="446" width="2" height="1.7" fill="#2f5597"/>
<rect x="571" y="446" width="1.8" height="1.7" fill="#2f5597"/>
<rect x="565" y="449" width="2" height="1.7" fill="#2f5597"/>
<rect x="571" y="449" width="1.8" height="1.7" fill="#2f5597"/>
<rect x="565" y="452" width="2" height="1.7" fill="#2f5597"/>
<rect x="571" y="452" width="1.8" height="1.7" fill="#2f5597"/>
<rect x="568" y="441.6" width="1.8" height="1.3" fill="#2f5597"/>
<rect x="568" y="444.6" width="1.8" height="1.3" fill="#2f5597"/>
<rect x="568" y="447.6" width="1.8" height="1.3" fill="#2f5597"/>
<rect x="568" y="450.6" width="1.8" height="1.3" fill="#2f5597"/>
<path d="M408.8,442.9 H420 L408.8,457 H420.6 M421,442.9 L427.6,450.3 L434.2,442.9 M427.6,450.3 V457.6 M436.4,457.6 V442.9 L446.4,457.6 V442.9" fill="none" stroke="#6c6c6c" stroke-width="1.45" stroke-linejoin="bevel" stroke-miterlimit="1"/>
<ellipse cx="456.4" cy="450.2" rx="6.9" ry="7.3" fill="none" stroke="#6c6c6c" stroke-width="1.45"/>
<path d="M459.5,454.5 L463.8,458.2" stroke="#6c6c6c" stroke-width="1.45"/>
<path d="M460,435.8 h9.2 l3.8,5.9 h-9 z" fill="#0c4a7c"/>
<path d="M473.3,442 h7.5 l-5.8,5.7 h-6.7 z" fill="#b9c9da"/>
<rect x="465" y="456" width="1.2" height="1.2" fill="#777"/>
<rect x="660.5" y="310.5" width="173.0" height="128.0" rx="5" ry="5" fill="#ecf4fe" stroke="#3d63ab" stroke-width="1"/>
<text x="746.6" y="306" font-size="10.3" text-anchor="middle" fill="#000" textLength="98" lengthAdjust="spacingAndGlyphs" >axi_cpu_interconnect</text>
<text x="747" y="448.5" font-size="10.4" text-anchor="middle" fill="#4b6cae" >AXI Interconnect</text>
<rect x="663" y="313" width="11" height="11" rx="2" fill="#2d4c8e"/>
<path d="M665.5,318.3 h5.8 M668.4,315.4 v5.8" stroke="#fff" stroke-width="1.8"/>
<line x1="654.2" y1="345.6" x2="660.7" y2="345.6" stroke="#000" stroke-width="2.2"/>
<text x="666.3000000000001" y="348.0" font-size="8.6" text-anchor="start" fill="#000" >ACLK</text>
<line x1="654.2" y1="360" x2="660.7" y2="360" stroke="#000" stroke-width="2.2"/>
<text x="666.3000000000001" y="362.4" font-size="8.6" text-anchor="start" fill="#000" >ARESETN</text>
<line x1="654.2" y1="374.4" x2="660.7" y2="374.4" stroke="#000" stroke-width="2.2"/>
<text x="666.3000000000001" y="376.79999999999995" font-size="8.6" text-anchor="start" fill="#000" >S00_ACLK</text>
<line x1="654.2" y1="388.8" x2="660.7" y2="388.8" stroke="#000" stroke-width="2.2"/>
<text x="666.3000000000001" y="391.2" font-size="8.6" text-anchor="start" fill="#000" >S00_ARESETN</text>
<line x1="654.2" y1="403.5" x2="660.7" y2="403.5" stroke="#000" stroke-width="2.2"/>
<text x="666.3000000000001" y="405.9" font-size="8.6" text-anchor="start" fill="#000" >M00_ACLK</text>
<line x1="654.2" y1="417.5" x2="660.7" y2="417.5" stroke="#000" stroke-width="2.2"/>
<text x="666.3000000000001" y="419.9" font-size="8.6" text-anchor="start" fill="#000" >M00_ARESETN</text>
<text x="677" y="333.2" font-size="8.6" text-anchor="start" fill="#000" >S00_AXI</text>
<rect x="654" y="323.9" width="1.2" height="1.2" fill="#2f5597"/>
<rect x="657" y="323.9" width="1.2" height="1.2" fill="#2f5597"/>
<rect x="654" y="326.9" width="1.2" height="1.2" fill="#2f5597"/>
<rect x="657" y="326.9" width="1.2" height="1.2" fill="#2f5597"/>
<rect x="654" y="329.9" width="1.2" height="1.2" fill="#2f5597"/>
<rect x="657" y="329.9" width="1.2" height="1.2" fill="#2f5597"/>
<rect x="654" y="332.9" width="1.2" height="1.2" fill="#2f5597"/>
<rect x="657" y="332.9" width="1.2" height="1.2" fill="#2f5597"/>
<rect x="654" y="335.9" width="1.2" height="1.2" fill="#2f5597"/>
<rect x="657" y="335.9" width="1.2" height="1.2" fill="#2f5597"/>
<text x="815" y="377" font-size="8.6" text-anchor="end" fill="#000" >M00_AXI</text>
<path d="M822,374.5 h7.7 M825.5,370.4 v7.7" stroke="#2f5597" stroke-width="1"/>
<rect x="833" y="367.5" width="2" height="1.7" fill="#2f5597"/>
<rect x="839" y="367.5" width="1.8" height="1.7" fill="#2f5597"/>
<rect x="833" y="370.5" width="2" height="1.7" fill="#2f5597"/>
<rect x="839" y="370.5" width="1.8" height="1.7" fill="#2f5597"/>
<rect x="833" y="373.5" width="2" height="1.7" fill="#2f5597"/>
<rect x="839" y="373.5" width="1.8" height="1.7" fill="#2f5597"/>
<rect x="833" y="376.5" width="2" height="1.7" fill="#2f5597"/>
<rect x="839" y="376.5" width="1.8" height="1.7" fill="#2f5597"/>
<rect x="833" y="379.5" width="2" height="1.7" fill="#2f5597"/>
<rect x="839" y="379.5" width="1.8" height="1.7" fill="#2f5597"/>
<rect x="836" y="369.1" width="1.8" height="1.3" fill="#2f5597"/>
<rect x="836" y="372.1" width="1.8" height="1.3" fill="#2f5597"/>
<rect x="836" y="375.1" width="1.8" height="1.3" fill="#2f5597"/>
<rect x="836" y="378.1" width="1.8" height="1.3" fill="#2f5597"/>
<rect x="737" y="352" width="8" height="7.8" fill="#2f5090"/>
<rect x="764.1" y="352" width="7.8" height="7.8" fill="#2f5090"/>
<rect x="737" y="370.1" width="8" height="7.8" fill="#2f5090"/>
<rect x="764.1" y="370.1" width="7.8" height="7.8" fill="#2f5090"/>
<rect x="737" y="387" width="8" height="7.8" fill="#2f5090"/>
<rect x="764.1" y="387" width="7.8" height="7.8" fill="#2f5090"/>
<path d="M747,356 h16" stroke="#2f5090" stroke-width="1.1"/>
<path d="M747,373.9 h16" stroke="#2f5090" stroke-width="1.1"/>
<path d="M747,391.1 h16" stroke="#2f5090" stroke-width="1.1"/>
<path d="M748.5,358.5 l13,12 M761.5,358.5 l-13,12 M748.5,376.5 l13,12 M761.5,376.5 l-13,12" stroke="#2f5090" stroke-width="1.1"/>
<rect x="956.5" y="267.5" width="116.0" height="99.0" rx="5" ry="5" fill="#ecf4fe" stroke="#3d63ab" stroke-width="1"/>
<text x="1014.5" y="263" font-size="10.3" text-anchor="middle" fill="#000" textLength="70" lengthAdjust="spacingAndGlyphs" >led_count_ip_0</text>
<text x="1013.5" y="377.5" font-size="10.4" text-anchor="middle" fill="#4b6cae" >led_count_ip</text>
<line x1="949.75" y1="302.2" x2="956.25" y2="302.2" stroke="#000" stroke-width="3.0"/>
<text x="962.95" y="305.2" font-size="8.6" text-anchor="start" fill="#000" >IPCORE_CLK</text>
<line x1="949.25" y1="317" x2="953.65" y2="317" stroke="#000" stroke-width="2.5"/>
<circle cx="953.65" cy="317" r="2.05" fill="#fff" stroke="#000" stroke-width="2.1"/>
<text x="962.95" y="320.0" font-size="8.6" text-anchor="start" fill="#000" >IPCORE_RESETN</text>
<line x1="949.75" y1="331.2" x2="956.25" y2="331.2" stroke="#000" stroke-width="3.0"/>
<text x="962.95" y="334.2" font-size="8.6" text-anchor="start" fill="#000" >AXI4_ACLK</text>
<line x1="949.25" y1="345.5" x2="953.65" y2="345.5" stroke="#000" stroke-width="2.5"/>
<circle cx="953.65" cy="345.5" r="2.05" fill="#fff" stroke="#000" stroke-width="2.1"/>
<text x="962.95" y="348.5" font-size="8.6" text-anchor="start" fill="#000" >AXI4_ARESETN</text>
<text x="973.1" y="291.5" font-size="8.6" text-anchor="start" fill="#000" textLength="18.2" lengthAdjust="spacingAndGlyphs" >AXI4</text>
<path d="M959.4,288.5 h7.5" stroke="#2f5597" stroke-width="1"/>
<rect x="950" y="281" width="2" height="2" fill="#2f5597"/>
<rect x="953" y="281" width="2" height="2" fill="#2f5597"/>
<rect x="950" y="284" width="2" height="2" fill="#2f5597"/>
<rect x="953" y="284" width="2" height="2" fill="#2f5597"/>
<rect x="950" y="287" width="2" height="2" fill="#2f5597"/>
<rect x="953" y="287" width="2" height="2" fill="#2f5597"/>
<rect x="950" y="290" width="2" height="2" fill="#2f5597"/>
<rect x="953" y="290" width="2" height="2" fill="#2f5597"/>
<rect x="950" y="293" width="2" height="2" fill="#2f5597"/>
<rect x="953" y="293" width="2" height="2" fill="#2f5597"/>
<path d="M1116.3,398.2 h10.6 l4.8,5.3 -4.8,5.3 h-10.6 z" fill="#e2d9d5" stroke="#1d5566" stroke-width="2.3"/>
<text x="1139.7" y="407.1" font-size="10.4" text-anchor="start" fill="#111" textLength="21.8" lengthAdjust="spacingAndGlyphs" >DDR</text>
<path d="M1116.3,412.2 h10.6 l4.8,5.3 -4.8,5.3 h-10.6 z" fill="#e2d9d5" stroke="#1d5566" stroke-width="2.3"/>
<text x="1139.7" y="421.1" font-size="10.4" text-anchor="start" fill="#111" textLength="46.2" lengthAdjust="spacingAndGlyphs" >FIXED_IO</text>
</svg>
</body></html>
